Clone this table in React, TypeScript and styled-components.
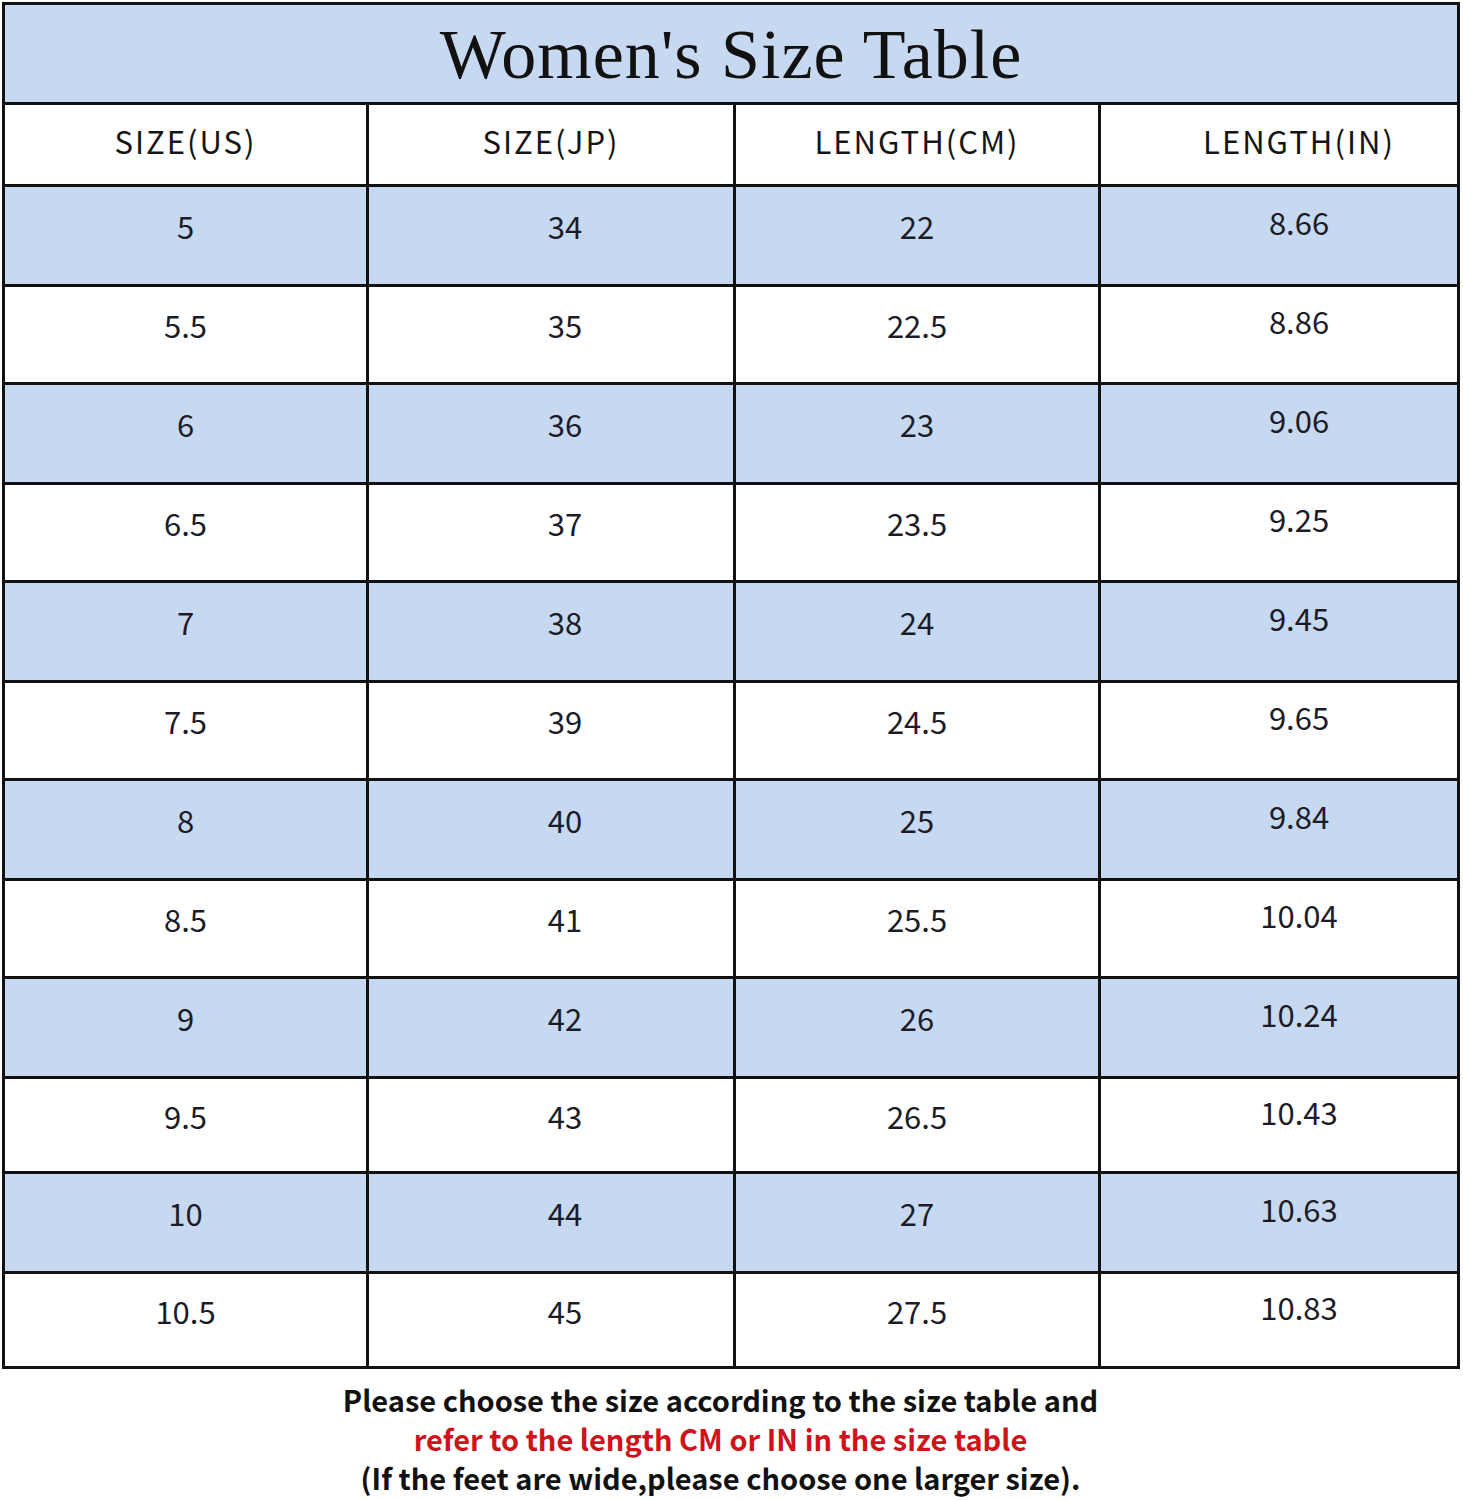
import React from "react";
import styled, { createGlobalStyle } from "styled-components";

const GlobalStyle = createGlobalStyle`
  body {
    margin: 0;
    background: #fff;
    font-family: "Noto Sans CJK SC", "Noto Sans", sans-serif;
  }
`;

const BLUE = "#c6d9f0";
const LINE = "#111";

const Page = styled.div`
  width: 1463px;
  padding: 2px 0 0 2px;
  box-sizing: border-box;
`;

const Table = styled.div`
  width: 1458px;
  border: 3px solid ${LINE};
  box-sizing: border-box;
`;

const TitleBar = styled.div`
  height: 97px;
  background: ${BLUE};
  display: flex;
  align-items: center;
  justify-content: center;
  font-family: "Liberation Serif", "DejaVu Serif", serif;
  font-size: 70px;
  color: #111;
  letter-spacing: 1px;
  padding-top: 2px;
  box-sizing: border-box;
`;

const Row = styled.div<{ $h: number; $blue?: boolean }>`
  display: grid;
  grid-template-columns: 361px 367px 365px 1fr;
  height: ${(p) => p.$h}px;
  border-top: 3px solid ${LINE};
  background: ${(p) => (p.$blue ? BLUE : "#fff")};
  box-sizing: border-box;
`;

const Cell = styled.div<{ $shift?: number; $lift?: number }>`
  display: flex;
  align-items: center;
  justify-content: center;
  padding-left: ${(p) => (p.$shift ?? 0) * 2}px;
  padding-bottom: ${(p) => (p.$lift ?? 10) * 2}px;
  font-size: 31px;
  color: #1c1c28;
  & + & {
    border-left: 3px solid ${LINE};
  }
`;

const HeadCell = styled(Cell)`
  font-size: 31px;
  letter-spacing: 2px;
  color: #151515;
`;

const Note = styled.div`
  padding: 11px 24px 0 0;
  text-align: center;
  font-family: "Noto Sans CJK SC", sans-serif;
  font-weight: 700;
  font-size: 29px;
  line-height: 39px;
  color: #111;
`;

const Red = styled.div`
  color: #d0121b;
`;

const rows: [string, string, string, string][] = [
  ["5", "34", "22", "8.66"],
  ["5.5", "35", "22.5", "8.86"],
  ["6", "36", "23", "9.06"],
  ["6.5", "37", "23.5", "9.25"],
  ["7", "38", "24", "9.45"],
  ["7.5", "39", "24.5", "9.65"],
  ["8", "40", "25", "9.84"],
  ["8.5", "41", "25.5", "10.04"],
  ["9", "42", "26", "10.24"],
  ["9.5", "43", "26.5", "10.43"],
  ["10", "44", "27", "10.63"],
  ["10.5", "45", "27.5", "10.83"],
];

const heights = [100, 98, 100, 98, 100, 98, 100, 98, 100, 95, 100, 95];

export default function App() {
  return (
    <Page>
      <GlobalStyle />
      <Table>
        <TitleBar>Women's Size Table</TitleBar>
        <Row $h={82}>
          <HeadCell $lift={4}>SIZE(US)</HeadCell>
          <HeadCell $lift={4}>SIZE(JP)</HeadCell>
          <HeadCell $lift={4}>LENGTH(CM)</HeadCell>
          <HeadCell $lift={4} $shift={20}>
            LENGTH(IN)
          </HeadCell>
        </Row>
        {rows.map((r, i) => (
          <Row key={r[0]} $h={heights[i]} $blue={i % 2 === 0}>
            <Cell>{r[0]}</Cell>
            <Cell $shift={14}>{r[1]}</Cell>
            <Cell>{r[2]}</Cell>
            <Cell $shift={20} $lift={14}>
              {r[3]}
            </Cell>
          </Row>
        ))}
      </Table>
      <Note>
        <div>Please choose the size according to the size table and</div>
        <Red>refer to the length CM or IN in the size table</Red>
        <div>(If the feet are wide,please choose one larger size).</div>
      </Note>
    </Page>
  );
}
